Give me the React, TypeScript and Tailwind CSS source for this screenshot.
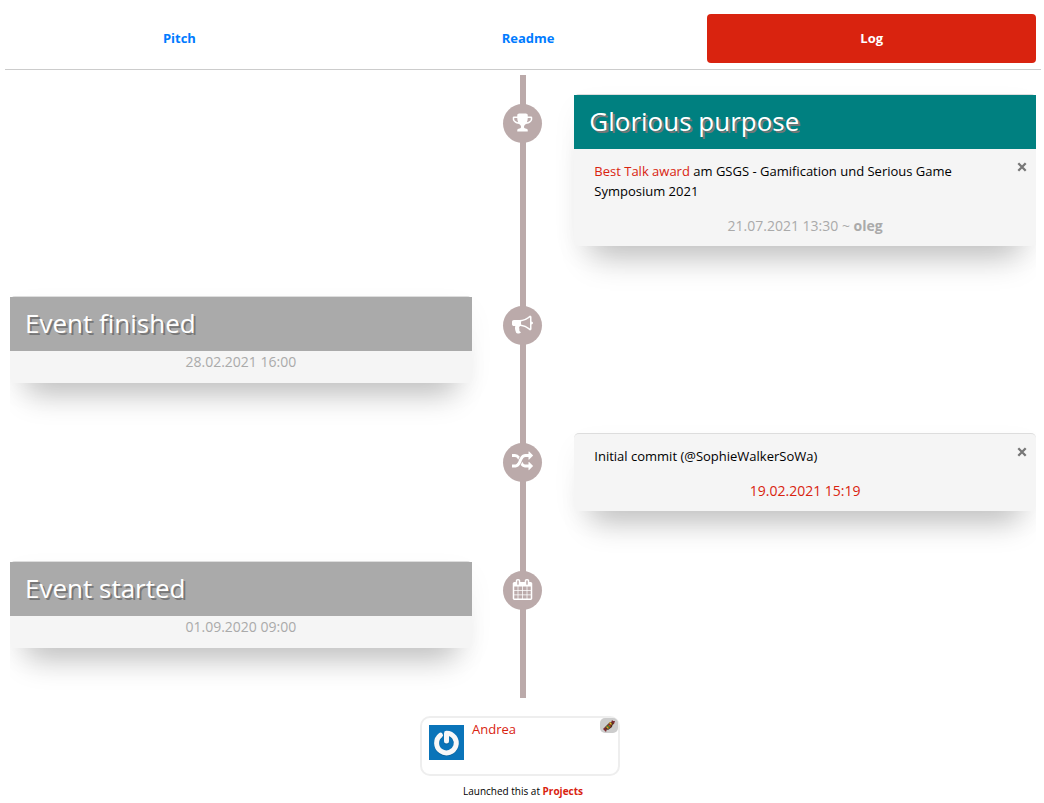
import type { ReactNode } from "react";

const ICONS = {
  trophy:
    "M522 883q-74-162-74-371h-256v96q0 78 94.5 162t235.5 113zm1078-275v-96h-256q0 209-74 371 141-29 235.5-113t94.5-162zm128-128v128q0 71-41.5 143t-112 130-173 97.5-215.5 44.5q-42 54-95 95-38 34-52.5 72.5t-14.5 89.5q0 54 30.5 91t97.5 37q75 0 133.5 45.5t58.5 114.5v64q0 14-9 23t-23 9h-832q-14 0-23-9t-9-23v-64q0-69 58.5-114.5t133.5-45.5q67 0 97.5-37t30.5-91q0-51-14.5-89.5t-52.5-72.5q-53-41-95-95-113-5-215.5-44.5t-173-97.5-112-130-41.5-143v-128q0-40 28-68t68-28h288v-96q0-66 47-113t113-47h576q66 0 113 47t47 113v96h288q40 0 68 28t28 68z",
  bullhorn:
    "M1664 640q53 0 90.5 37.5t37.5 90.5-37.5 90.5-90.5 37.5v384q0 52-38 90t-90 38q-417-347-812-380-58 19-91 66t-31 100.5 40 92.5q-20 33-23 65.5t6 58 33.5 55 48 50 61.5 50.5q-29 58-111.5 83t-168.5 11.5-132-55.5q-7-23-29.5-87.5t-32-94.5-23-89-15-101 3.5-98.5 22-110.5h-122q-66 0-113-47t-47-113v-192q0-66 47-113t113-47h480q435 0 896-384 52 0 90 38t38 90v384zm-128 604v-954q-394 302-768 343v270q377 42 768 341z",
  random:
    "M666 481q-60 92-137 273-22-45-37-72.5t-40.5-63.5-51-56.5-63-35-81.5-14.5h-224q-14 0-23-9t-9-23v-192q0-14 9-23t23-9h224q250 0 410 225zm1126 799q0 14-9 23l-320 320q-9 9-23 9-13 0-22.5-9.5t-9.5-22.5v-192q-32 0-85 .5t-81 1-73-1-71-5-64-10.5-63-18.5-58-28.5-59-40-55-53.5-56-69.5q59-93 136-273 22 45 37 72.5t40.5 63.5 51 56.5 63 35 81.5 14.5h256v-192q0-14 9-23t23-9q12 0 24 10l319 319q9 9 9 23zm0-896q0 14-9 23l-320 320q-9 9-23 9-13 0-22.5-9.5t-9.5-22.5v-192h-256q-48 0-87 15t-69 45-51 61.5-45 77.5q-32 62-78 171-29 66-49.5 111t-54 105-64 100-74 83-90 68.5-106.5 42-128 16.5h-224q-14 0-23-9t-9-23v-192q0-14 9-23t23-9h224q48 0 87-15t69-45 51-61.5 45-77.5q32-62 78-171 29-66 49.5-111t54-105 64-100 74-83 90-68.5 106.5-42 128-16.5h256v-192q0-14 9-23t23-9q12 0 24 10l319 319q9 9 9 23z",
  calendar:
    "M192 1664h288v-288h-288v288zm352 0h320v-288h-320v288zm-352-352h288v-320h-288v320zm352 0h320v-320h-320v320zm-352-384h288v-288h-288v288zm736 736h320v-288h-320v288zm-384-736h320v-288h-320v288zm768 736h288v-288h-288v288zm-384-352h320v-320h-320v320zm-352-864v-288q0-13-9.5-22.5t-22.5-9.5h-64q-13 0-22.5 9.5t-9.5 22.5v288q0 13 9.5 22.5t22.5 9.5h64q13 0 22.5-9.5t9.5-22.5zm736 864h288v-320h-288v320zm-384-384h320v-288h-320v288zm384 0h288v-288h-288v288zm32-480v-288q0-13-9.5-22.5t-22.5-9.5h-64q-13 0-22.5 9.5t-9.5 22.5v288q0 13 9.5 22.5t22.5 9.5h64q13 0 22.5-9.5t9.5-22.5zm384-64v1280q0 52-38 90t-90 38h-1408q-52 0-90-38t-38-90v-1280q0-52 38-90t90-38h128v-96q0-66 47-113t113-47h64q66 0 113 47t47 113v96h384v-96q0-66 47-113t113-47h64q66 0 113 47t47 113v96h128q52 0 90 38t38 90z",
};

type IconName = keyof typeof ICONS;

function Icon({ name, className }: { name: IconName; className: string }) {
  return (
    <svg viewBox="0 0 1792 1792" fill="currentColor" aria-hidden="true" className={className}>
      <path d={ICONS[name]} />
    </svg>
  );
}

type Entry = {
  icon: IconName;
  side: "left" | "right";
  title?: string;
  titleClass?: string;
  body?: ReactNode;
  footer: ReactNode;
};

const ENTRIES: Entry[] = [
  {
    icon: "trophy",
    side: "right",
    title: "Glorious purpose",
    titleClass: "bg-[#008080]",
    body: (
      <>
        <a href="#award" className="text-[#d9230f]">Best Talk award</a> am GSGS - Gamification und Serious Game
        Symposium 2021
      </>
    ),
    footer: (
      <>
        21.07.2021 13:30 ~ <b>oleg</b>
      </>
    ),
  },
  {
    icon: "bullhorn",
    side: "left",
    title: "Event finished",
    titleClass: "bg-[#aaaaaa]",
    footer: "28.02.2021 16:00",
  },
  {
    icon: "random",
    side: "right",
    body: "Initial commit (@SophieWalkerSoWa)",
    footer: (
      <a href="#commit" className="text-[#d9230f]">19.02.2021 15:19</a>
    ),
  },
  {
    icon: "calendar",
    side: "left",
    title: "Event started",
    titleClass: "bg-[#aaaaaa]",
    footer: "01.09.2020 09:00",
  },
];

function Card({ entry }: { entry: Entry }) {
  return (
    <article className="rounded-[5px] border-t border-[#dddddd] bg-[#f5f5f5] pb-2.5 shadow-[0_10px_30px_-4px_rgba(0,0,0,0.06),0_30px_30px_-18px_rgba(0,0,0,0.22)]">
      {entry.title && (
        <h2
          className={`px-[15px] pb-0.5 text-[26px] leading-[52px] text-white [text-shadow:2px_2px_0_#777] ${entry.titleClass}`}
        >
          {entry.title}
        </h2>
      )}
      {entry.body && (
        <div className="flex items-start pt-3 pr-2 pb-[15px] pl-5">
          <p className="flex-1 pr-10 text-black">{entry.body}</p>
          <button type="button" aria-label="Remove" className="text-[#777777]">
            <svg viewBox="0 0 12 12" className="size-3" aria-hidden="true">
              <path d="M2.300 2.300l7.400 7.400M9.700 2.300l-7.400 7.400" stroke="currentColor" strokeWidth="2.300" />
            </svg>
          </button>
        </div>
      )}
      <p className={`text-center text-sm leading-5 text-[#aaaaaa] ${entry.body ? "" : "pt-px pb-px"}`}>
        {entry.footer}
      </p>
    </article>
  );
}

function Candy() {
  return (
    <svg viewBox="0 0 12 12" className="size-3" aria-hidden="true">
      <path d="M0 9l2-2 2 2-1 3-1-1zM8 3l1-3 1 1 2 0-1 3-2 1z" fill="#7a2a30" />
      <path d="M2 7l5-5 3 1-1 4-4 3-2-1z" fill="#4a3320" />
      <path d="M3 7l1-1 2 2-1 1z" fill="#e0a020" />
      <path d="M5 5l1-1 2 2-1 1z" fill="#d83a28" />
      <path d="M6 3l1-1 2 2-1 1z" fill="#e8b828" />
      <path d="M4 6l1-1 2 2-1 1z" fill="#4f8a3a" />
    </svg>
  );
}

function Avatar() {
  return (
    <svg viewBox="0 0 35 35" className="size-[35px]" aria-hidden="true">
      <rect width="35" height="35" fill="#0a74b9" />
      <g fill="none" strokeWidth="5" strokeLinecap="round" strokeLinejoin="round">
        <path d="M11.500 11A9.840 9.840 0 1 0 17.500 9V17" stroke="#08609a" />
        <path d="M11.500 10.200A9.840 9.840 0 1 0 17.500 8.200V16" stroke="#f8f8f8" />
      </g>
    </svg>
  );
}

export default function App() {
  return (
    <main className="bg-white pr-[3px] pl-[5px] font-['Open_Sans','Noto_Sans',sans-serif] text-[13px] leading-5 text-black">
      <nav className="flex border-b border-[#cccccc] px-[5px] pt-3.5 pb-1.5 text-center font-bold leading-[49px]">
        <a href="#pitch" className="flex-auto text-[#007bff]">Pitch</a>
        <a href="#readme" className="flex-auto text-[#007bff]">Readme</a>
        <a href="#log" aria-current="page" className="flex-auto rounded bg-[#d9230f] text-white">Log</a>
      </nav>

      <section className="mx-[5px] mt-[5px] overflow-x-clip">
        <ol className="flex flex-col bg-[linear-gradient(#bbaaaa,#bbaaaa)] bg-[length:6px_100%] bg-center bg-no-repeat pt-[19px]">
          {ENTRIES.map((entry) => (
            <li key={entry.icon} className="grid grid-cols-[45%_1fr_45%] items-start pb-[50px]">
              <div>{entry.side === "left" && <Card entry={entry} />}</div>
              <div className="flex justify-center pt-2.5 pr-px">
                <span className="flex size-[39px] items-center justify-center rounded-full bg-[#bbaaaa] pb-0.5 text-white">
                  <Icon name={entry.icon} className="size-[21px]" />
                </span>
              </div>
              <div>{entry.side === "right" && <Card entry={entry} />}</div>
            </li>
          ))}
        </ol>
      </section>

      <footer className="flex flex-col items-center pt-[18px]">
        <div className="pr-1.5">
          <div className="relative flex h-[60px] w-[200px] items-start rounded-[10px] border-2 border-[#eeeeee] p-[7px]">
            <Avatar />
            <a href="#andrea" className="-mt-1.5 ml-2 text-[#d9230f]">Andrea</a>
            <span className="absolute top-0 right-0 flex h-[15px] w-[18px] items-center justify-center rounded-[5px] bg-[#cccccc]">
              <Candy />
            </span>
          </div>
        </div>
        <p className="pt-[5px] text-[10px]">
          Launched this at <a href="#projects" className="font-bold text-[#d9230f]">Projects</a>
        </p>
      </footer>
    </main>
  );
}
